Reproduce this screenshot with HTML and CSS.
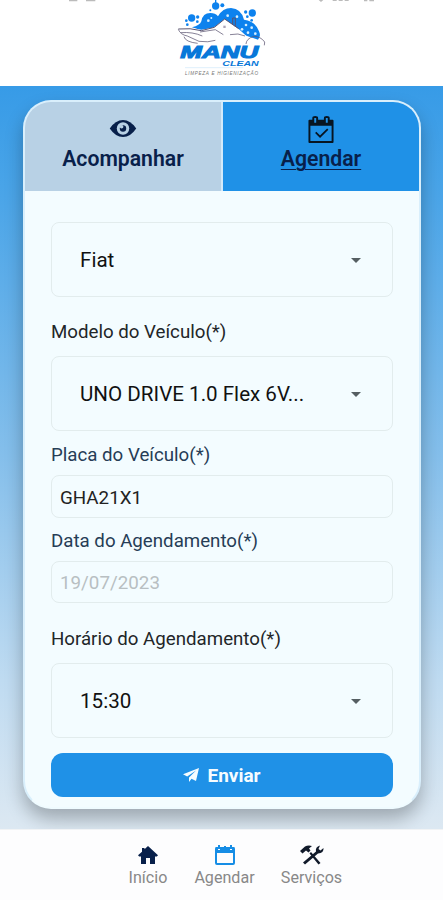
FILE: index.html
```html
<!DOCTYPE html>
<html lang="pt-BR">
<head>
<meta charset="utf-8">
<meta name="viewport" content="width=device-width, initial-scale=1">
<title>Manu Clean</title>
<link rel="stylesheet" href="styles.css">
</head>
<body>
<header class="header">
  <svg class="header-art" viewBox="0 0 1329 258" role="img" aria-label="Manu Clean">
    <g fill="#bbb"><path d="M207 0h25v4h-25zM258 0h28v4h-28zM956 0h14l-7 6zM998 0h12v3h-12zM1016 0h12v3h-12zM1034 0h12v3h-12zM1092 0h10v4h-10zM1108 0h14v4h-14z"/></g>
    <g transform="translate(480 0)">
      <g fill="#0d82ee">
        <path d="M96 82Q120 76 124 64Q128 39 151 39Q166 39 174 49Q188 24 213 24Q244 26 252 59Q286 63 297 94Q304 108 294 119L250 104L205 66L155 84L124 91Z"/>
        <path d="M165 0h4v9h-4z"/><circle cx="167" cy="18" r="11"/><circle cx="187" cy="16" r="6"/><circle cx="151" cy="31" r="3"/>
        <circle cx="95" cy="54" r="11"/><circle cx="113" cy="51" r="5"/><circle cx="112" cy="65" r="4"/><circle cx="79" cy="62" r="4"/><circle cx="82" cy="74" r="4"/>
        <circle cx="277" cy="39" r="11"/><circle cx="257" cy="36" r="5"/><circle cx="262" cy="50" r="4"/><circle cx="275" cy="61" r="4"/>
      </g>
      <g fill="#d6efff"><circle cx="145" cy="62" r="4"/><circle cx="154" cy="54" r="3"/><circle cx="203" cy="47" r="4"/><circle cx="231" cy="50" r="4"/><circle cx="258" cy="75" r="4"/><circle cx="246" cy="88" r="4"/><circle cx="275" cy="83" r="4"/><circle cx="264" cy="98" r="4"/><circle cx="286" cy="101" r="4"/></g>
      <path d="M55 87Q86 82 124 89L160 83L194 57L237 88L260 109L213 107L154 112L113 117L70 105Z" fill="#fff"/>
      <g fill="none" stroke="#5a5470" stroke-width="3" stroke-linejoin="round">
        <path d="M55 87Q91 83 124 92L163 82L194 57L236 86M218 73V54H226V80"/>
        <path d="M55 88Q61 104 82 108L117 124Q145 128 166 121M62 98Q98 95 127 108M72 110Q76 126 113 130M120 96L166 89L190 104M210 104Q235 98 255 108M258 132Q259 116 281 109Q302 109 314 126L313 136" stroke-width="2.2"/>
      </g>
      <path d="M190 77h7v7h-7z" fill="#aaa4b8"/>
      <text class="logo-main" x="61" y="174" textLength="234" lengthAdjust="spacingAndGlyphs">MANU</text>
      <text class="logo-sub" x="187" y="198" textLength="109" lengthAdjust="spacingAndGlyphs">CLEAN</text>
      <path d="M75 203H250" stroke="#9fcdf3" stroke-width="1"/>
      <text class="logo-tag" x="75" y="225" textLength="219">LIMPEZA E HIGIENIZAÇÃO</text>
    </g>
  </svg>
</header>

<main class="page">
  <section class="card">
    <div class="tabs">
      <a class="tab">
        <svg class="eye" viewBox="0 0 28 18"><path d="M0 9Q6 0 14 0T28 9Q22 18 14 18T0 9Z" fill="#08204a"/><circle cx="14" cy="9" r="6.6" fill="#b8d1e5"/><circle cx="14" cy="9" r="3.4" fill="#08204a"/><circle cx="12.5" cy="7.2" r="1.9" fill="#b8d1e5"/></svg>
        <span class="tab-text">Acompanhar</span>
      </a>
      <a class="tab active">
        <svg class="calendar" viewBox="0 0 26 28"><path fill="#071522" fill-rule="evenodd" d="M1 4H4V2Q4 0 7 0T10 2V4H16V2Q16 0 19 0T22 2V4H25Q26 4 26 5V27Q26 28 25 28H1Q0 28 0 27V5Q0 4 1 4ZM2 10V26H24V10ZM6 2V7H8V2ZM18 2V7H20V2Z"/><path d="M7.5 17L12 21.5L20 13.5" fill="none" stroke="#071522" stroke-width="1.8"/></svg>
        <span class="tab-text schedule">Agendar</span>
      </a>
    </div>
    <form class="form">
      <div class="select"><span>Fiat</span><i class="arrow"></i></div>
      <label class="label model">Modelo do Veículo(*)</label>
      <div class="select"><span>UNO DRIVE 1.0 Flex 6V...</span><i class="arrow"></i></div>
      <label class="label navy plate">Placa do Veículo(*)</label>
      <div class="input"><span>GHA21X1</span></div>
      <label class="label navy date">Data do Agendamento(*)</label>
      <div class="input muted"><span>19/07/2023</span></div>
      <label class="label time">Horário do Agendamento(*)</label>
      <div class="select"><span>15:30</span><i class="arrow"></i></div>
      <button class="submit" type="button">
        <svg class="plane" viewBox="0 0 16 14"><path fill="#f5fcff" d="M16 0L0 6.2L4.2 8.4L13 2.4L6 9.5V14L8.5 10.7L13 13Z"/></svg>
        <span>Enviar</span>
      </button>
    </form>
  </section>
</main>

<nav class="nav">
  <a class="nav-item home"><svg viewBox="0 0 22 20"><path fill="#08204a" d="M11 1L21 10.3L19.8 11.5H18V19H13V13H9V19H4V11.5H2.2L1 10.3L5 6.7V3H7.5V4.3Z"/></svg><span>Início</span></a>
  <a class="nav-item agenda"><svg viewBox="0 0 22 20"><path fill="#168de5" fill-rule="evenodd" d="M2 2H4V0H6V2H10V1H12V2H16V0H18V2H20Q21 2 21 4V18Q21 20 19 20H3Q1 20 1 18V4Q1 2 2 2ZM3 8V18H19V8ZM4 4V5H6V4ZM16 4V5H18V4Z"/></svg><span>Agendar</span></a>
  <a class="nav-item services"><svg viewBox="0 0 24 20"><path fill="#111a2a" d="M0 6L5 1.5Q8 0 12 1L9 3.5L10.5 5.5L8.5 7.5L6 5.5L2.5 8.5ZM9.5 8.5L11 7L20.5 18L18.5 19.5ZM3 17.5L16 6.5Q15 2 20 .5L18.5 4L20.5 5.5L23.5 3Q24 8 18 8.5L5 19.5Z"/></svg><span>Serviços</span></a>
</nav>
</body>
</html>
```
FILE: styles.css
```css
* { box-sizing: border-box; }
body { margin: 0; width: 443px; height: 900px; overflow: hidden; display: flex; flex-direction: column; font-family: Roboto, sans-serif; background: #fdfdfe; }
.header { height: 86px; flex: none; background: #fff; }
.header-art { display: block; width: 443px; height: 86px; }
.logo-main { font: italic bold 48px "Liberation Sans", sans-serif; fill: #0878d9; stroke: #0878d9; stroke-width: 3; }
.logo-sub { font: italic bold 20px "Liberation Sans", sans-serif; fill: #0878d9; }
.logo-tag { font: italic 14px "Liberation Sans", sans-serif; fill: #777; }
.page { height: 743px; flex: none; overflow: hidden; padding: 14px 22px 0 23px; background: linear-gradient(#379be7 0%, #4ba5e8 15%, #85bfeb 50%, #bfdbf1 80%, #dce8f2 100%); }
.card { height: 709px; border: 2px solid #d9effc; border-bottom-color: #effbff; border-radius: 28px; overflow: hidden; background: #f3fcff; box-shadow: 0 10px 18px rgba(0, 0, 0, .27); }
.tabs { height: 89px; display: grid; grid-template-columns: 1fr 1fr; gap: 2px; background: #d4eafa; }
.tab { display: flex; flex-direction: column; align-items: center; background: #b8d1e5; color: #08204a; font-size: 21.2px; font-weight: 600; line-height: 26px; }
.active { background: #1f91e7; }
.eye { width: 28px; height: 17px; margin-top: 18px; margin-bottom: 9px; }
.calendar { width: 26px; height: 27px; margin-top: 14px; margin-bottom: 3px; }
.schedule { text-decoration: underline; text-decoration-thickness: 1px; text-underline-offset: 3px; }
.form { padding: 31px 26px 0; display: flex; flex-direction: column; }
.select { height: 75px; flex: none; border: 1px solid #e2eced; border-radius: 8px; padding: 1px 31px 0 28px; display: flex; align-items: center; justify-content: space-between; color: #111; font-size: 20.6px; }
.arrow { width: 0; height: 0; border: 5.5px solid transparent; border-top-color: #555e62; border-bottom: 0; }
.label { color: #222629; font-size: 18.7px; line-height: 24px; white-space: nowrap; }
.navy { color: #263d56; }
.model { margin: 23px 0 12px; }
.plate { margin: 12px 0 8px; }
.date { margin: 11px 0 8px; }
.time { margin: 24px 0 12px; }
.input { height: 43px; flex: none; border: 1px solid #e2eced; border-radius: 8px; padding: 2px 8px 0; display: flex; align-items: center; color: #222; font-size: 18.8px; }
.muted { height: 42px; color: #b8bfc2; }
.submit { height: 44px; margin: 15px 0 0; padding: 0; border: 0; border-radius: 12px; background: #1f91e7; color: #f5fcff; font: 700 19px Roboto, sans-serif; display: flex; align-items: center; justify-content: center; gap: 8px; }
.plane { width: 16px; height: 14px; }
.nav { height: 71px; flex: none; display: flex; padding: 15px 0 0 122px; background: #fdfdfe; border-top: 1px solid #f1f3f5; }
.nav-item { display: flex; flex-direction: column; align-items: center; color: #888; font-size: 16.1px; line-height: 20px; }
.nav-item svg { width: 22px; height: 20px; margin-bottom: 3px; }
.home { width: 52px; }
.agenda { width: 101px; }
.services { width: 73px; }
.services svg { width: 24px; }
```
